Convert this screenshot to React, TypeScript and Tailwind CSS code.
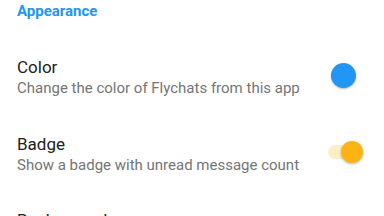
export default function App() {
  return (
    <main
      className="h-[216px] w-[384px] overflow-hidden bg-white pt-[1px]"
      style={{ fontFamily: "Roboto, 'Noto Sans', sans-serif" }}
    >
      <div className="px-[17px] text-[15px] font-bold leading-[20px] text-[#2196f3]">Appearance</div>

      <div className="mt-[35px] flex items-center justify-between pl-[17px]">
        <div>
          <p className="text-[17px] leading-[22px] text-[#212121]">Color</p>
          <p className="text-[15px] leading-[20px] text-[#757575]">Change the color of Flychats from this app</p>
        </div>
        <span className="mr-[28px] -mt-[3px] h-[25px] w-[25px] rounded-full bg-[#2196f3] shadow-[0_1px_2px_rgba(0,0,0,0.3)]" />
      </div>

      <div className="mt-[35px] flex items-center justify-between pl-[17px]">
        <div>
          <p className="text-[17px] leading-[22px] text-[#212121]">Badge</p>
          <p className="text-[15px] leading-[20px] text-[#757575]">Show a badge with unread message count</p>
        </div>
        <span className="relative mr-[21px] -mt-[4px] flex h-[22px] w-[35px] items-center">
          <span className="h-[14px] w-[32px] rounded-full bg-[#fcefc6]" />
          <span className="absolute right-0 top-0 h-[22px] w-[22px] rounded-full bg-[#fbb414] shadow-[0_1px_3px_rgba(0,0,0,0.3)]" />
        </span>
      </div>

      <div className="mt-[34px] pl-[17px]">
        <p className="text-[17px] leading-[22px] text-[#212121]">Background</p>
      </div>
    </main>
  );
}
